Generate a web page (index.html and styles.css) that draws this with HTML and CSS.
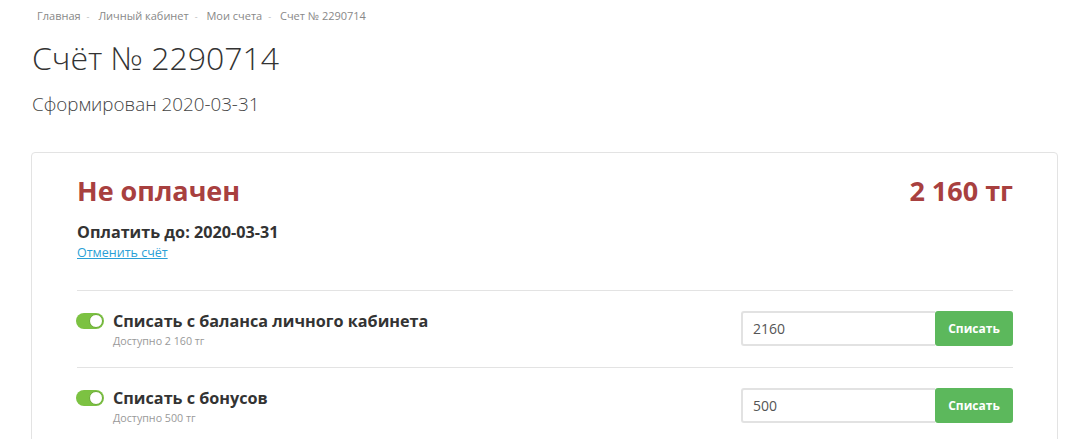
FILE: index.html
```html
<!DOCTYPE html>
<html lang="ru">
<head>
  <meta charset="UTF-8">
  <title>Счёт № 2290714</title>
  <meta name="viewport" content="width=device-width, initial-scale=1" />
  <link rel="stylesheet" href="styles.css">
</head>
<body>
  <div class="page">
    <div class="breadcrumbs">
      <a href="#">Главная</a><span class="sep">-</span>
      <a href="#">Личный кабинет</a><span class="sep">-</span>
      <a href="#">Мои счета</a><span class="sep">-</span>
      <span>Счет № 2290714</span>
    </div>

    <h1>Счёт № 2290714</h1>
    <div class="created">Сформирован 2020-03-31</div>

    <div class="card">
      <div class="status-row">
        <div class="status">Не оплачен</div>
        <div class="total">2 160 тг</div>
      </div>
      <div class="due">Оплатить до: 2020-03-31</div>
      <div class="cancel"><a href="#">Отменить счёт</a></div>

      <div class="pay-row">
        <div class="pay-info">
          <span class="toggle on"><span class="knob"></span></span>
          <div>
            <div class="pay-title">Списать с баланса личного кабинета</div>
            <div class="pay-note">Доступно 2 160 тг</div>
          </div>
        </div>
        <div class="pay-form">
          <input type="text" value="2160">
          <button>Списать</button>
        </div>
      </div>

      <div class="pay-row">
        <div class="pay-info">
          <span class="toggle on"><span class="knob"></span></span>
          <div>
            <div class="pay-title">Списать с бонусов</div>
            <div class="pay-note">Доступно 500 тг</div>
          </div>
        </div>
        <div class="pay-form">
          <input type="text" value="500">
          <button>Списать</button>
        </div>
      </div>
    </div>
  </div>
</body>
</html>
```

FILE: styles.css
```css
body { margin: 0; font-family: "Open Sans", Arial, sans-serif; color: #333; background: #fff; }
.page { padding: 0 30px 0 31px; }

.breadcrumbs { padding: 8px 0 0 6px; font-size: 11px; line-height: 16px; color: #888; }
.breadcrumbs a { color: #888; text-decoration: none; }
.breadcrumbs .sep { color: #bbb; margin: 0 6px; font-size: 9px; }

h1 { margin: 11px 0 0 1px; font-size: 32px; font-weight: 300; line-height: 44px; color: #333; }
.created { margin: 11px 0 0 1px; font-size: 18.8px; font-weight: 300; line-height: 26px; color: #444; }

.card { margin-top: 35px; border: 1px solid #e3e3e3; border-radius: 4px; padding: 20px 44px 0 45px; }

.status-row { display: flex; justify-content: space-between; align-items: baseline; }
.status, .total { font-size: 27px; font-weight: 700; line-height: 36px; color: #a8403f; }

.due { margin-top: 12px; font-size: 16.2px; font-weight: 700; line-height: 22px; }
.cancel { margin-top: 2px; margin-bottom: 29px; font-size: 12.5px; line-height: 16px; }
.cancel a { color: #2a9fd6; }

.pay-row { display: flex; justify-content: space-between; align-items: flex-start; border-top: 1px solid #e3e3e3; padding: 20px 0 19px; }
.pay-info { display: flex; align-items: flex-start; gap: 9px; }
.pay-title { font-size: 16.2px; font-weight: 700; line-height: 20px; }
.pay-note { font-size: 10.7px; line-height: 14px; color: #999; margin-top: 3px; }

.toggle { display: block; position: relative; width: 28px; height: 16px; margin: 2px 0 0 -1px; border-radius: 8px; background: #7cc242; }
.toggle .knob { position: absolute; top: 1px; right: 1px; width: 14px; height: 14px; box-sizing: border-box; border-radius: 50%; background: #fff; border: 1px solid #6aaa35; }

.pay-form { display: flex; }
.pay-form input { width: 194px; height: 35px; box-sizing: border-box; border: 2px solid #e2e2e2; border-right: none; border-radius: 3px 0 0 3px; padding: 0 10px; font-family: inherit; font-size: 14px; color: #555; outline: none; }
.pay-form button { width: 78px; height: 35px; border: none; border-radius: 3px; background: #5cb85c; color: #fff; font-family: inherit; font-size: 12px; font-weight: 700; cursor: pointer; }
```
